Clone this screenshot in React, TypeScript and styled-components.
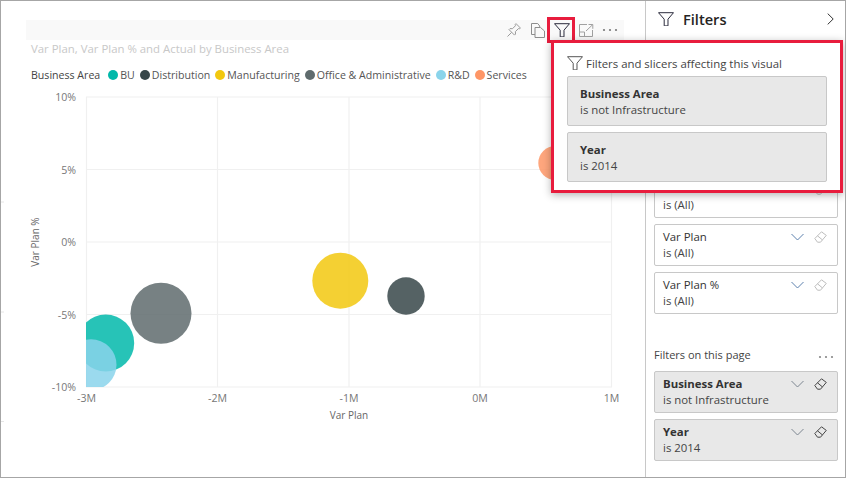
import React from 'react';
import styled, {createGlobalStyle} from 'styled-components';

const GlobalStyle = createGlobalStyle`
  html, body {
    margin: 0;
    padding: 0;
    background: #fff;
    font-family: "Open Sans", "Noto Sans", sans-serif;
  }
`;

const Frame = styled.div`
  position: relative;
  box-sizing: border-box;
  width: 846px;
  height: 478px;
  display: flex;
  border: 1px solid #a6a6a6;
  overflow: hidden;
`;

const ReportPane = styled.main`
  width: 645px;
  box-sizing: border-box;
  border-right: 1px solid #c8c8c8;
  padding-top: 19px;
  flex-shrink: 0;
`;

const Toolbar = styled.div`
  height: 20px;
  margin-left: 25px;
  margin-right: 21px;
  padding-right: 2px;
  background: #f9f9f9;
  display: flex;
  justify-content: flex-end;
  align-items: center;
`;

const ToolSlot = styled.span`
  width: 24px;
  height: 20px;
  display: flex;
  align-items: center;
  justify-content: center;
`;

const ChartTitle = styled.div`
  margin-left: 30px;
  height: 18px;
  line-height: 18px;
  font-size: 11.4px;
  color: #c8c8c8;
  white-space: nowrap;
`;

const Legend = styled.div`
  margin: 9px 0 0 30px;
  height: 16px;
  display: flex;
  align-items: center;
  font-size: 10.6px;
  color: #555;
  white-space: nowrap;
`;

const LegendName = styled.span`
  color: #444;
  margin-right: 8px;
`;

const LegendItem = styled.span`
  display: flex;
  align-items: center;
  gap: 2px;
  margin-right: 5px;
`;

const LegendDot = styled.i<{$color: string}>`
  width: 10px;
  height: 10px;
  border-radius: 50%;
  background: ${p => p.$color};
`;

const ChartSvg = styled.svg`
  display: block;
  text {
    font-family: "Open Sans", "Noto Sans", sans-serif;
  }
`;

const AxisLabel = styled.text`
  font-size: 10.6px;
  fill: #777;
`;

const AxisName = styled.text`
  font-size: 10px;
  fill: #666;
`;

const FilterPane = styled.aside`
  flex: 1;
  min-width: 0;
  padding: 0 7px 0 8px;
  display: flex;
  flex-direction: column;
`;

const FilterHeader = styled.header`
  height: 41px;
  margin-right: 3px;
  padding: 0 1px 5px 4px;
  box-sizing: border-box;
  display: flex;
  align-items: center;
  gap: 9px;
`;

const FilterTitle = styled.h2`
  margin: 0;
  flex: 1;
  font-size: 14.6px;
  font-weight: 600;
  color: #252423;
`;

const SectionLabel = styled.div`
  height: 16px;
  line-height: 16px;
  font-size: 11px;
  color: #444;
  display: flex;
  justify-content: space-between;
  margin-bottom: 8px;
`;

const VisualLabel = styled(SectionLabel)`
  margin-top: 14px;
`;

const PageLabel = styled(SectionLabel)`
  margin-top: 33px;
`;

const CardStack = styled.div`
  display: flex;
  flex-direction: column;
  gap: 6px;
`;

const FilterCard = styled.div<{$applied?: boolean}>`
  height: 42px;
  box-sizing: border-box;
  border: 1px solid ${p => (p.$applied ? '#c8c8c8' : '#c8c8c8')};
  border-radius: 2px;
  background: ${p => (p.$applied ? '#e8e8e8' : '#fff')};
  padding: 4px 10px 4px 8px;
  display: flex;
  justify-content: space-between;
  font-size: 11.4px;
  line-height: 16px;
  color: #333;
`;

const CardName = styled.div<{$applied?: boolean}>`
  font-weight: ${p => (p.$applied ? 700 : 400)};
  color: #333;
`;

const CardValue = styled.div`
  color: #444;
`;

const CardIcons = styled.div`
  display: flex;
  gap: 10px;
  height: 16px;
  align-items: center;
`;

const Popover = styled.div`
  position: absolute;
  left: 550px;
  top: 39px;
  width: 292px;
  box-sizing: border-box;
  border: 3px solid #e81c3d;
  background: #fff;
  padding: 11px 13px 8px;
  box-shadow: 0 2px 8px rgba(0, 0, 0, 0.3);
`;

const PopoverHeading = styled.div`
  height: 18px;
  margin-bottom: 4px;
  display: flex;
  align-items: center;
  gap: 3px;
  font-size: 11.4px;
  color: #444;
  white-space: nowrap;
`;

const PopoverStack = styled.div`
  display: flex;
  flex-direction: column;
  gap: 6px;
`;

const PopoverCard = styled.div`
  height: 50px;
  box-sizing: border-box;
  border: 1px solid #c8c8c8;
  border-radius: 2px;
  background: #e8e8e8;
  padding: 9px 12px 7px;
  font-size: 11.4px;
  line-height: 16px;
  color: #444;
`;

const PopoverName = styled.div`
  font-weight: 700;
  color: #333;
`;

const IconHighlight = styled.div`
  position: absolute;
  left: 546px;
  top: 16px;
  width: 28px;
  height: 26px;
  box-sizing: border-box;
  border: 3px solid #e81c3d;
  &::after {
    content: "";
    position: absolute;
    left: 4px;
    bottom: -3px;
    width: 18px;
    height: 3px;
    background: #fff;
  }
`;

const Funnel = ({size = 16, color = '#2a2a3c'}: {size?: number; color?: string}) => (
  <svg width={size} height={size * 0.9} viewBox="0 0 16 14.4" fill="none" stroke={color} strokeWidth="1">
    <path d="M.5.7h15L10 7.2v6.7H6.2V7.2z" strokeLinejoin="round" />
  </svg>
);

const Pin = () => (
  <svg width="14" height="14" viewBox="0 0 14 14" fill="none" stroke="#9a9a9a" strokeWidth="1">
    <path d="M9 .6l4.4 4.4-1 1-1-.4-3 3 .1 2.5-1 1L2 6.6l1-1 2.5.1 3-3-.4-1z" />
    <path d="M4.7 9.3L.5 13.5" />
  </svg>
);

const Copy = () => (
  <svg width="14" height="15" viewBox="0 0 14 15" fill="none" stroke="#8c8c8c" strokeWidth="1">
    <path d="M4 11.5H.5V.5h6.2l2 2.5v1" />
    <path d="M4 4.5h5.5l4 3.5v6.5H4z" />
  </svg>
);

const Focus = () => (
  <svg width="15" height="13" viewBox="0 0 15 13" fill="none" stroke="#a0a0a0" strokeWidth="1">
    <path d="M8 .5H.5v12h13V6" />
    <path d="M.5 8h5v4.5" />
    <path d="M7 7L13.5.8M9.5.5h4.3v4.3" />
  </svg>
);

const More = ({color = '#777'}: {color?: string}) => (
  <svg width="16" height="4" viewBox="0 0 16 4" fill={color}>
    <circle cx="2" cy="2" r="1.1" />
    <circle cx="8" cy="2" r="1.1" />
    <circle cx="14" cy="2" r="1.1" />
  </svg>
);

const Chevron = ({color}: {color: string}) => (
  <svg width="13" height="8" viewBox="0 0 13 8" fill="none" stroke={color} strokeWidth="1">
    <path d="M.5 1l6 6 6-6" />
  </svg>
);

const Eraser = ({color}: {color: string}) => (
  <svg width="13" height="12" viewBox="0 0 13 12" fill="none" stroke={color} strokeWidth="1">
    <path d="M.8 7.5L7.5.8l4.8 3.6-5.8 6.8H3.5z" strokeLinejoin="round" />
    <path d="M3.5 4.8l4.8 4" />
  </svg>
);

const legendItems = [
  {name: 'BU', color: '#01b8aa'},
  {name: 'Distribution', color: '#374649'},
  {name: 'Manufacturing', color: '#f2c80f'},
  {name: 'Office & Administrative', color: '#5f6b6d'},
  {name: 'R&D', color: '#8ad4eb'},
  {name: 'Services', color: '#fe9666'},
];

const bubbles = [
  {cx: 105.7, cy: 343, r: 28.5, color: '#01b8aa'},
  {cx: 91, cy: 364.7, r: 25.5, color: '#8ad4eb'},
  {cx: 161, cy: 313.3, r: 30.5, color: '#5f6b6d'},
  {cx: 340.3, cy: 280.7, r: 28, color: '#f2c80f'},
  {cx: 406, cy: 296, r: 18.7, color: '#374649'},
  {cx: 555.3, cy: 163, r: 17, color: '#fe9666'},
];

const gridX = [
  {x: 86.5, label: '-3M'},
  {x: 217.5, label: '-2M'},
  {x: 349, label: '-1M'},
  {x: 480, label: '0M'},
  {x: 611.5, label: '1M'},
];

const gridY = [
  {y: 97, label: '10%'},
  {y: 169.5, label: '5%'},
  {y: 242, label: '0%'},
  {y: 314.5, label: '-5%'},
  {y: 387, label: '-10%'},
];

function BubbleChart() {
  return (
    <ChartSvg width="644" height="393" viewBox="1 83 644 393">
      <defs>
        <clipPath id="plot">
          <rect x="86" y="97" width="526" height="290" />
        </clipPath>
      </defs>
      {[202, 312, 421.5].map(y => (
        <line key={y} x1="1" x2="4" y1={y} y2={y} stroke="#e6e6e6" />
      ))}
      {gridX.map(g => (
        <g key={g.label}>
          <line x1={g.x} x2={g.x} y1="97" y2="387" stroke="#f0f0f0" strokeWidth="1.2" />
          <AxisLabel x={g.x} y="402" textAnchor="middle">{g.label}</AxisLabel>
        </g>
      ))}
      {gridY.map(g => (
        <g key={g.label}>
          <line x1="86" x2="612" y1={g.y} y2={g.y} stroke="#f0f0f0" strokeWidth="1.2" />
          <AxisLabel x="76" y={g.y + 4} textAnchor="end">{g.label}</AxisLabel>
        </g>
      ))}
      <g clipPath="url(#plot)">
        {bubbles.map(b => (
          <circle key={b.cx} cx={b.cx} cy={b.cy} r={b.r} fill={b.color} fillOpacity="0.85" />
        ))}
      </g>
      <AxisName x="349" y="419" textAnchor="middle">Var Plan</AxisName>
      <AxisName x="39" y="242" textAnchor="middle" transform="rotate(-90 39 242)">Var Plan %</AxisName>
    </ChartSvg>
  );
}

function Card({name, value, applied}: {name: string; value: string; applied?: boolean}) {
  return (
    <FilterCard $applied={applied}>
      <div>
        <CardName $applied={applied}>{name}</CardName>
        <CardValue>{value}</CardValue>
      </div>
      <CardIcons>
        <Chevron color={applied ? '#7d8590' : '#5d80ad'} />
        <Eraser color={applied ? '#444' : '#bdbdbd'} />
      </CardIcons>
    </FilterCard>
  );
}

function App() {
  return (
    <Frame>
      <GlobalStyle />
      <ReportPane>
        <Toolbar>
          <ToolSlot><Pin /></ToolSlot>
          <ToolSlot><Copy /></ToolSlot>
          <ToolSlot><Funnel /></ToolSlot>
          <ToolSlot><Focus /></ToolSlot>
          <ToolSlot><More /></ToolSlot>
        </Toolbar>
        <ChartTitle>Var Plan, Var Plan % and Actual by Business Area</ChartTitle>
        <Legend>
          <LegendName>Business Area</LegendName>
          {legendItems.map(item => (
            <LegendItem key={item.name}>
              <LegendDot $color={item.color} />
              {item.name}
            </LegendItem>
          ))}
        </Legend>
        <BubbleChart />
      </ReportPane>

      <FilterPane>
        <FilterHeader>
          <Funnel />
          <FilterTitle>Filters</FilterTitle>
          <svg width="7" height="12" viewBox="0 0 7 12" fill="none" stroke="#333" strokeWidth="1">
            <path d="M.7.6L6.2 6 .7 11.4" />
          </svg>
        </FilterHeader>
        <VisualLabel>Filters on this visual</VisualLabel>
        <CardStack>
          <Card name="Actual" value="is (All)" />
          <Card name="Business Area" value="is (All)" />
          <Card name="Plan" value="is (All)" />
          <Card name="Var Plan" value="is (All)" />
          <Card name="Var Plan %" value="is (All)" />
        </CardStack>
        <PageLabel>
          Filters on this page
          <ToolSlot><More color="#888" /></ToolSlot>
        </PageLabel>
        <CardStack>
          <Card name="Business Area" value="is not Infrastructure" applied />
          <Card name="Year" value="is 2014" applied />
        </CardStack>
      </FilterPane>

      <IconHighlight />
      <Popover>
        <PopoverHeading>
          <Funnel color="#555" />
          Filters and slicers affecting this visual
        </PopoverHeading>
        <PopoverStack>
          <PopoverCard>
            <PopoverName>Business Area</PopoverName>
            is not Infrastructure
          </PopoverCard>
          <PopoverCard>
            <PopoverName>Year</PopoverName>
            is 2014
          </PopoverCard>
        </PopoverStack>
      </Popover>
    </Frame>
  );
}

export default App;
